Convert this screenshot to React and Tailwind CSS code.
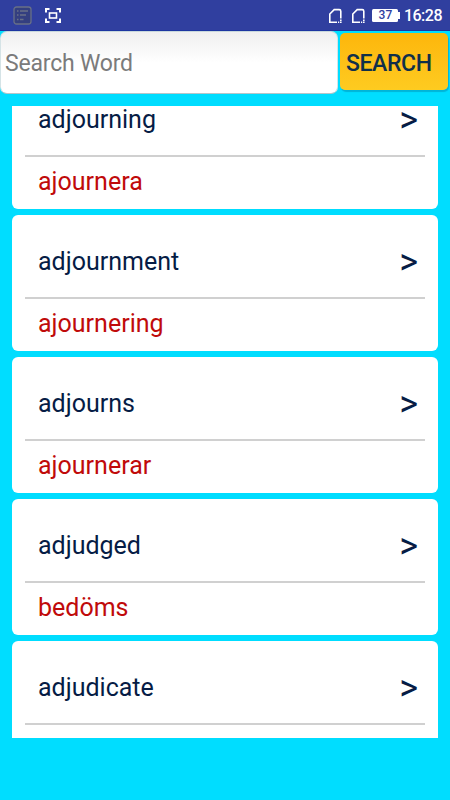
const entries = [
  { word: 'adjourning', translation: 'ajournera' },
  { word: 'adjournment', translation: 'ajournering' },
  { word: 'adjourns', translation: 'ajournerar' },
  { word: 'adjudged', translation: 'bedöms' },
  { word: 'adjudicate', translation: '' },
];

const SimIcon = () => (
  <svg className="w-[15px] h-4" viewBox="0 0 15 16" fill="none" stroke="#fff" strokeWidth="1.6">
    <path d="M9 14.2H1.8V6L6.2 1.6H11.2Q12.8 1.6 12.8 3.2V10.5" />
    <path d="M10 14.2h1.2M12.8 11.4v1.6M12.8 13.6v1.4" />
  </svg>
);

const StatusBar = () => (
  <div className="h-[31px] shrink-0 bg-[#303f9f] border-b border-[#1c35a0] flex items-center justify-between pl-[13px] pr-2 pt-px">
    <div className="flex items-center gap-[13px]">
      <svg className="w-[19px] h-[19px]" viewBox="0 0 19 19" fill="none" stroke="#687087" strokeWidth="1.3">
        <rect x="1" y="1" width="17" height="17" rx="2.5" fill="#343f80" />
        <path d="M4 5h1.5M7 5h8M4 9h1.5M7 9h6M4 13.5h1.5M7 13.5h3.5" />
      </svg>
      <svg className="w-4 h-[15px]" viewBox="0 0 16 15" fill="none" stroke="#fff" strokeWidth="2">
        <path d="M1 4.5V1h3.5M11.5 1H15v3.5M15 10.5V14h-3.5M4.5 14H1v-3.5" />
        <rect x="4.5" y="5" width="7" height="5" strokeWidth="1.6" />
      </svg>
    </div>
    <div className="flex items-center text-white">
      <div className="flex gap-[8px]">
        <SimIcon />
        <SimIcon />
      </div>
      <div className="ml-[6px] w-[26px] h-[13px] rounded-[1.5px] bg-white text-[#303f9f] text-[12px] leading-[13px] font-medium text-center">37</div>
      <div className="w-[1.5px] h-[7px] bg-white" />
      <span className="ml-1 text-[16px] leading-5 font-medium tracking-[-0.5px]">16:28</span>
    </div>
  </div>
);

const WordCard = ({ word, translation }) => (
  <div className="h-[136px] shrink-0 rounded-[6px] bg-white px-[13px]">
    <div className="h-[84px] border-b-2 border-[#d0d0d0] pl-[13px] pr-[7px] pt-[11px] flex items-center justify-between text-[#061c45]">
      <span className="text-[25px] leading-[22px]">{word}</span>
      <span className="text-[36px] leading-[22px]">&gt;</span>
    </div>
    {translation && (
      <div className="pl-[13px] pt-[10px] text-[25px] leading-[30px] text-[#c00a0a]">{translation}</div>
    )}
  </div>
);

const App = () => {
  return (
    <div className="w-[450px] h-[800px] overflow-hidden bg-[#00ddff] flex flex-col font-['Roboto',sans-serif]">
      <StatusBar />

      {/* Search row */}
      <div className="flex items-start h-[75px] shrink-0 pr-[2px]">
        <div className="w-[338px] h-[63px] rounded-[7px] border border-t-[#c8d8dc] border-x-[#d5e3e6] border-b-[#b5c5c9] bg-linear-to-b from-[#efefef] to-white to-50% flex items-center pl-1 pt-[3px] text-[23px] tracking-[-0.2px] text-[#7b7b7b]">
          Search Word
        </div>
        <button className="ml-[2px] mt-[2px] w-[108px] h-[57px] rounded-[5px] bg-linear-to-b from-[#fdb60a] to-[#fecb20] shadow-[1px_2px_1px_#00b4d8] pl-[6px] pt-[5px] text-left text-[23px] tracking-[-0.4px] font-medium text-[#10304a]">
          SEARCH
        </button>
      </div>

      {/* Scrolled word list */}
      <div className="mx-3 h-[632px] shrink-0 overflow-hidden">
        <div className="-mt-[33px] flex flex-col gap-[6px]">
          {entries.map((entry) => (
            <WordCard key={entry.word} word={entry.word} translation={entry.translation} />
          ))}
        </div>
      </div>
    </div>
  );
};

export default App;
